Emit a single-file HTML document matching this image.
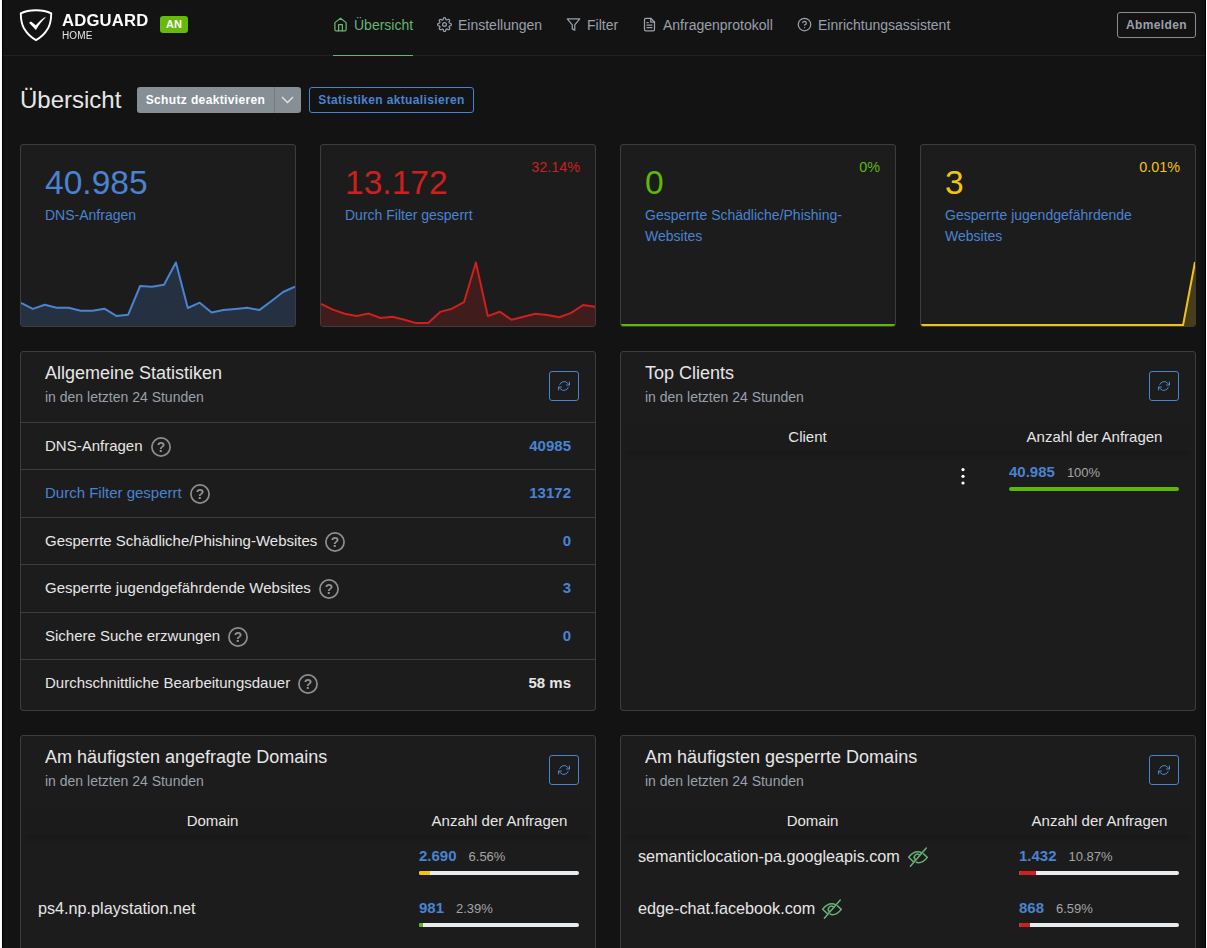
<!DOCTYPE html>
<html lang="de">
<head>
<meta charset="utf-8">
<title>AdGuard Home</title>
<style>
*{box-sizing:border-box;margin:0;padding:0}
html,body{width:1207px;height:948px;overflow:hidden;background:#131313}
body{font-family:"Liberation Sans",Arial,sans-serif;color:#e6e6e6;font-size:15px;position:relative}
.abs{position:absolute}
.edgeL{left:0;top:0;width:3px;height:948px;background:#000;border-left:2px solid #fff}
.edgeR{left:1205px;top:0;width:2px;height:948px;background:#000;border-right:1px solid #fff}
.hdr{left:3px;top:0;width:1202px;height:56px;border-bottom:1px solid #222}
.nav a{position:absolute;top:0;height:56px;color:#9aa0ac;font-size:14px;line-height:50px;white-space:nowrap;text-decoration:none}
.nav a svg{position:absolute;top:17px;width:15px;height:15px;stroke:currentColor;fill:none;stroke-width:2;stroke-linecap:round;stroke-linejoin:round}
.nav a.act{color:#66b574;border-bottom:1px solid #66b574}
.card{position:absolute;background:#1c1c1c;border:1px solid #3d3d3d;border-radius:3px;overflow:hidden}
.t{position:absolute;white-space:nowrap}
.blue{color:#4a83d1}
.btn{position:absolute;font-weight:bold;font-size:12px;letter-spacing:.36px;border-radius:3px;white-space:nowrap;text-align:center}
.rf{position:absolute;width:30px;height:30px;border:1px solid #4a83d1;border-radius:3px}
.rf svg{position:absolute;left:8px;top:8px;width:12px;height:12px;stroke:#4a83d1;fill:none;stroke-width:2;stroke-linecap:round;stroke-linejoin:round}
.title{font-size:18px;line-height:22px;color:#e6e6e6}
.sub{font-size:14px;line-height:18px;color:#9aa0ac}
.row{position:absolute;left:0;width:574px;height:48px;border-top:1px solid #3d3d3d}
.row .l{position:absolute;left:24px;top:0;line-height:46px;font-size:15px;white-space:nowrap}
.row .v{position:absolute;right:24px;top:0;line-height:46px;font-size:15px;font-weight:bold;color:#4a83d1}
.q{display:inline-block;width:20px;height:20px;vertical-align:middle;margin-left:8px;position:relative;top:0px;color:#939393;font-size:14px;font-weight:bold;line-height:21px;text-align:center;will-change:transform}
.q svg{position:absolute;left:0;top:0}
.th{position:absolute;font-size:15px;line-height:20px;color:#e6e6e6;text-align:center;white-space:nowrap}
.num{position:absolute;font-size:15px;font-weight:bold;color:#4a83d1;white-space:nowrap;line-height:16px}
.num span{font-weight:normal;color:#a5a5a5;font-size:13px;margin-left:12px}
.thr{position:absolute;left:0;top:69px;width:574px;height:30px;background:#1b1b1b;border-top:1px solid #191d25;box-shadow:0 7px 8px -5px rgba(0,0,0,.22)}
.bar{position:absolute;height:4px;width:160px;background:#e9ecef;border-radius:2px;overflow:hidden}
.bar i{display:block;height:4px}
</style>
</head>
<body>
<div class="abs edgeL"></div>
<div class="abs edgeR"></div>

<!-- header -->
<div class="abs hdr"></div>
<svg class="abs" style="left:19px;top:8px" width="34" height="34" viewBox="0 0 34 34">
  <path d="M17 2.2C11.5 2.2 5.6 3.4 1.8 5.4c0 5 .3 9.600 3.300 15.200C8 25.600 12.400 29.700 17 32.100c4.600-2.400 9-6.500 11.900-11.500 3-5.600 3.300-10.200 3.300-15.200C28.400 3.400 22.500 2.200 17 2.200z" fill="none" stroke="#fff" stroke-width="1.9"/>
  <path d="M10 14.800l2-1.200 4.800 3.600c2.800-3.300 5.700-5.900 9.300-8.300l.5.600c-3.700 3.500-6.900 7.800-9.700 12.600z" fill="#fff"/>
</svg>
<div class="t" style="left:62px;top:11px;font-size:16px;font-weight:bold;color:#fff;letter-spacing:.2px;line-height:20px;transform:scaleX(1.04);transform-origin:0 0;will-change:transform">ADGUARD</div>
<div class="t" style="left:62px;top:29.500px;font-size:10px;color:#e6e6e6;letter-spacing:.1px;line-height:12px;will-change:transform">HOME</div>
<div class="t" style="left:160px;top:16px;width:28px;height:17px;background:#67b90a;border-radius:3px;color:#fff;font-size:11px;font-weight:bold;line-height:17px;text-align:center">AN</div>

<div class="nav">
  <a class="act" style="left:333px;width:80px;padding-left:21px"><svg style="left:0" viewBox="0 0 24 24"><path d="M3 9l9-7 9 7v11a2 2 0 0 1-2 2H5a2 2 0 0 1-2-2z"/><path d="M9 22V12h6v10"/></svg>Übersicht</a>
  <a style="left:437px;padding-left:21px"><svg style="left:0" viewBox="0 0 24 24"><circle cx="12" cy="12" r="3"/><path d="M19.400 15a1.650 1.650 0 0 0 .33 1.820l.06.06a2 2 0 0 1 0 2.830 2 2 0 0 1-2.830 0l-.06-.06a1.650 1.650 0 0 0-1.820-.33 1.650 1.650 0 0 0-1 1.510V21a2 2 0 0 1-2 2 2 2 0 0 1-2-2v-.09A1.650 1.650 0 0 0 9 19.400a1.650 1.650 0 0 0-1.820.33l-.06.06a2 2 0 0 1-2.830 0 2 2 0 0 1 0-2.830l.06-.06a1.650 1.650 0 0 0 .33-1.820 1.650 1.650 0 0 0-1.510-1H3a2 2 0 0 1-2-2 2 2 0 0 1 2-2h.09A1.650 1.650 0 0 0 4.600 9a1.650 1.650 0 0 0-.33-1.820l-.06-.06a2 2 0 0 1 0-2.830 2 2 0 0 1 2.830 0l.06.06a1.650 1.650 0 0 0 1.820.33H9a1.650 1.650 0 0 0 1-1.510V3a2 2 0 0 1 2-2 2 2 0 0 1 2 2v.09a1.650 1.650 0 0 0 1 1.510 1.650 1.650 0 0 0 1.820-.33l.06-.06a2 2 0 0 1 2.830 0 2 2 0 0 1 0 2.830l-.06.06a1.650 1.650 0 0 0-.33 1.820V9a1.650 1.650 0 0 0 1.510 1H21a2 2 0 0 1 2 2 2 2 0 0 1-2 2h-.09a1.650 1.650 0 0 0-1.510 1z"/></svg>Einstellungen</a>
  <a style="left:566px;padding-left:21px"><svg style="left:0" viewBox="0 0 24 24"><path d="M22 3H2l8 9.460V19l4 2v-8.540L22 3z"/></svg>Filter</a>
  <a style="left:642px;padding-left:21px"><svg style="left:0" viewBox="0 0 24 24"><path d="M14 2H6a2 2 0 0 0-2 2v16a2 2 0 0 0 2 2h12a2 2 0 0 0 2-2V8z"/><path d="M14 2v6h6M16 13H8M16 17H8M10 9H8"/></svg>Anfragenprotokoll</a>
  <a style="left:797px;padding-left:21px"><svg style="left:0" viewBox="0 0 24 24"><circle cx="12" cy="12" r="10"/><path d="M9.090 9a3 3 0 0 1 5.830 1c0 2-3 3-3 3M12 17h.01"/></svg>Einrichtungsassistent</a>
</div>
<div class="btn" style="left:1117px;top:12px;width:79px;height:26px;border:1px solid #868e96;color:#9aa0ac;line-height:24px">Abmelden</div>

<!-- page title -->
<div class="t" style="left:20px;top:84px;font-size:24px;line-height:32px;color:#e6e6e6">Übersicht</div>
<div class="btn" style="left:137px;top:87px;width:137px;height:26px;background:#868e96;color:#fff;line-height:26px;border-radius:3px 0 0 3px">Schutz deaktivieren</div>
<div class="btn" style="left:274px;top:87px;width:27px;height:26px;background:#868e96;border-left:1px solid #747b83;border-radius:0 3px 3px 0"><svg style="position:absolute;left:6px;top:9px" width="13" height="8" viewBox="0 0 13 8"><path d="M1 1l5.500 5.500L12 1" fill="none" stroke="#e6e6e6" stroke-width="1.300"/></svg></div>
<div class="btn" style="left:309px;top:87px;width:165px;height:26px;border:1px solid #4a83d1;color:#4a83d1;line-height:24px">Statistiken aktualisieren</div>

<!-- stat cards -->
<div class="card" style="left:20px;top:144px;width:276px;height:183px">
  <div class="t" style="left:24px;top:18px;font-size:33.600px;line-height:40px;color:#4a83d1">40.985</div>
  <div class="t blue" style="left:24px;top:60px;font-size:14px;line-height:21px">DNS-Anfragen</div>
  <svg class="abs" style="left:0;top:100px" width="274" height="81" viewBox="0 0 274 81"><path d="M0.0 57.9L11.9 63.9L23.8 59.8L35.7 62.8L47.7 62.8L59.6 65.8L71.5 65.8L83.4 63.7L95.3 70.9L107.2 69.7L119.1 41L131.0 41.7L143.0 39.8L154.9 17.5L166.8 63L178.7 57.7L190.6 67.6L202.5 64.9L214.4 63.9L226.3 62.8L238.3 65.1L250.2 56.3L262.1 47L274.0 41.7V81H0Z" fill="#253140"/><path d="M0.0 57.9L11.9 63.9L23.8 59.8L35.7 62.8L47.7 62.8L59.6 65.8L71.5 65.8L83.4 63.7L95.3 70.9L107.2 69.7L119.1 41L131.0 41.7L143.0 39.8L154.9 17.5L166.8 63L178.7 57.7L190.6 67.6L202.5 64.9L214.4 63.9L226.3 62.8L238.3 65.1L250.2 56.3L262.1 47L274.0 41.7" fill="none" stroke="#4a83d1" stroke-width="2" stroke-linejoin="round"/></svg>
</div>
<div class="card" style="left:320px;top:144px;width:276px;height:183px">
  <div class="t" style="left:24px;top:18px;font-size:33.600px;line-height:40px;color:#cd201f">13.172</div>
  <div class="t" style="right:15px;top:13px;font-size:14.400px;line-height:18px;color:#cd201f">32.14%</div>
  <div class="t blue" style="left:24px;top:60px;font-size:14px;line-height:21px">Durch Filter gesperrt</div>
  <svg class="abs" style="left:0;top:100px" width="274" height="81" viewBox="0 0 274 81"><path d="M0.0 58.8L11.9 64.6L23.8 68.8L35.7 71.1L47.7 68.6L59.6 73L71.5 71.8L83.4 74.8L95.3 78.1L107.2 78.1L119.1 66.9L131.0 63.7L143.0 57.2L154.9 17.5L166.8 71.1L178.7 66.7L190.6 74.8L202.5 71.8L214.4 68.8L226.3 70L238.3 72.3L250.2 67.9L262.1 60L274.0 61.8V81H0Z" fill="#3f1d1d"/><path d="M0.0 58.8L11.9 64.6L23.8 68.8L35.7 71.1L47.7 68.6L59.6 73L71.5 71.8L83.4 74.8L95.3 78.1L107.2 78.1L119.1 66.9L131.0 63.7L143.0 57.2L154.9 17.5L166.8 71.1L178.7 66.7L190.6 74.8L202.5 71.8L214.4 68.8L226.3 70L238.3 72.3L250.2 67.9L262.1 60L274.0 61.8" fill="none" stroke="#cd201f" stroke-width="2" stroke-linejoin="round"/></svg>
</div>
<div class="card" style="left:620px;top:144px;width:276px;height:183px">
  <div class="t" style="left:24px;top:18px;font-size:33.600px;line-height:40px;color:#5eba00">0</div>
  <div class="t" style="right:15px;top:13px;font-size:14.400px;line-height:18px;color:#5eba00">0%</div>
  <div class="t blue" style="left:24px;top:60px;font-size:14px;line-height:21px">Gesperrte Schädliche/Phishing-<br>Websites</div>
  <div class="abs" style="left:0;top:179px;width:274px;height:2px;background:#5eba00"></div>
</div>
<div class="card" style="left:920px;top:144px;width:276px;height:183px">
  <div class="t" style="left:24px;top:18px;font-size:33.600px;line-height:40px;color:#f1c40f">3</div>
  <div class="t" style="right:15px;top:13px;font-size:14.400px;line-height:18px;color:#f1c40f">0.01%</div>
  <div class="t blue" style="left:24px;top:60px;font-size:14px;line-height:21px">Gesperrte jugendgefährdende<br>Websites</div>
  <svg class="abs" style="left:0;top:100px" width="274" height="81" viewBox="0 0 274 81"><path d="M0 80H262.100L274 17V81H0Z" fill="#473e19"/><path d="M0 80H262.100L274 17" fill="none" stroke="#f1c40f" stroke-width="2" stroke-linejoin="miter"/></svg>
</div>

<!-- general stats -->
<div class="card" style="left:20px;top:351px;width:576px;height:360px">
  <div class="t title" style="left:24px;top:10px">Allgemeine Statistiken</div>
  <div class="t sub" style="left:24px;top:36px">in den letzten 24 Stunden</div>
  <div class="rf" style="left:528px;top:19px"><svg viewBox="0 0 24 24"><path d="M23 4v6h-6M1 20v-6h6"/><path d="M3.510 9a9 9 0 0 1 14.850-3.360L23 10M1 14l4.640 4.360A9 9 0 0 0 20.490 15"/></svg></div>
  <div class="row" style="top:70px"><div class="l">DNS-Anfragen<span class="q"><svg width="20" height="20" viewBox="0 0 20 20"><circle cx="10" cy="10" r="9.100" fill="none" stroke="#8e8e8e" stroke-width="1.700"/></svg>?</span></div><div class="v">40985</div></div>
  <div class="row" style="top:117px"><div class="l blue">Durch Filter gesperrt<span class="q"><svg width="20" height="20" viewBox="0 0 20 20"><circle cx="10" cy="10" r="9.100" fill="none" stroke="#8e8e8e" stroke-width="1.700"/></svg>?</span></div><div class="v">13172</div></div>
  <div class="row" style="top:165px"><div class="l">Gesperrte Schädliche/Phishing-Websites<span class="q"><svg width="20" height="20" viewBox="0 0 20 20"><circle cx="10" cy="10" r="9.100" fill="none" stroke="#8e8e8e" stroke-width="1.700"/></svg>?</span></div><div class="v">0</div></div>
  <div class="row" style="top:212px"><div class="l">Gesperrte jugendgefährdende Websites<span class="q"><svg width="20" height="20" viewBox="0 0 20 20"><circle cx="10" cy="10" r="9.100" fill="none" stroke="#8e8e8e" stroke-width="1.700"/></svg>?</span></div><div class="v">3</div></div>
  <div class="row" style="top:260px"><div class="l">Sichere Suche erzwungen<span class="q"><svg width="20" height="20" viewBox="0 0 20 20"><circle cx="10" cy="10" r="9.100" fill="none" stroke="#8e8e8e" stroke-width="1.700"/></svg>?</span></div><div class="v">0</div></div>
  <div class="row" style="top:307px"><div class="l">Durchschnittliche Bearbeitungsdauer<span class="q"><svg width="20" height="20" viewBox="0 0 20 20"><circle cx="10" cy="10" r="9.100" fill="none" stroke="#8e8e8e" stroke-width="1.700"/></svg>?</span></div><div class="v" style="color:#e6e6e6">58 ms</div></div>
</div>

<!-- top clients -->
<div class="card" style="left:620px;top:351px;width:576px;height:360px">
  <div class="t title" style="left:24px;top:10px">Top Clients</div>
  <div class="t sub" style="left:24px;top:36px">in den letzten 24 Stunden</div>
  <div class="rf" style="left:528px;top:19px"><svg viewBox="0 0 24 24"><path d="M23 4v6h-6M1 20v-6h6"/><path d="M3.510 9a9 9 0 0 1 14.850-3.360L23 10M1 14l4.640 4.360A9 9 0 0 0 20.490 15"/></svg></div>
  <div class="thr"></div>
  <div class="th" style="left:0;width:373px;top:75px">Client</div>
  <div class="th" style="left:373px;width:201px;top:75px">Anzahl der Anfragen</div>
  <svg class="abs" style="left:330px;top:112px" width="24" height="24" viewBox="0 0 24 24" fill="#fff"><circle cx="12" cy="5.600" r="1.600"/><circle cx="12" cy="12.300" r="1.600"/><circle cx="12" cy="19" r="1.600"/></svg>
  <div class="num" style="left:388px;top:112px">40.985<span>100%</span></div>
  <div class="bar" style="left:388px;top:135px;width:170px;background:#5eba00"></div>
</div>

<!-- top queried -->
<div class="card" style="left:20px;top:735px;width:576px;height:260px">
  <div class="t title" style="left:24px;top:10px">Am häufigsten angefragte Domains</div>
  <div class="t sub" style="left:24px;top:36px">in den letzten 24 Stunden</div>
  <div class="rf" style="left:528px;top:19px"><svg viewBox="0 0 24 24"><path d="M23 4v6h-6M1 20v-6h6"/><path d="M3.510 9a9 9 0 0 1 14.850-3.360L23 10M1 14l4.640 4.360A9 9 0 0 0 20.490 15"/></svg></div>
  <div class="thr"></div>
  <div class="th" style="left:0;width:383px;top:75px">Domain</div>
  <div class="th" style="left:383px;width:191px;top:75px">Anzahl der Anfragen</div>
  <div class="num" style="left:398px;top:112px">2.690<span>6.56%</span></div>
  <div class="bar" style="left:398px;top:135px"><i style="width:11px;background:#f1c40f"></i></div>
  <div class="t" style="left:17px;top:161px;font-size:16.200px;line-height:22px">ps4.np.playstation.net</div>
  <div class="num" style="left:398px;top:164px">981<span>2.39%</span></div>
  <div class="bar" style="left:398px;top:187px"><i style="width:4px;background:#5eba00"></i></div>
</div>

<!-- top blocked -->
<div class="card" style="left:620px;top:735px;width:576px;height:260px">
  <div class="t title" style="left:24px;top:10px">Am häufigsten gesperrte Domains</div>
  <div class="t sub" style="left:24px;top:36px">in den letzten 24 Stunden</div>
  <div class="rf" style="left:528px;top:19px"><svg viewBox="0 0 24 24"><path d="M23 4v6h-6M1 20v-6h6"/><path d="M3.510 9a9 9 0 0 1 14.850-3.360L23 10M1 14l4.640 4.360A9 9 0 0 0 20.490 15"/></svg></div>
  <div class="thr"></div>
  <div class="th" style="left:0;width:383px;top:75px">Domain</div>
  <div class="th" style="left:383px;width:191px;top:75px">Anzahl der Anfragen</div>
  <div class="t" style="left:17px;top:109px;font-size:16.200px;line-height:22px">semanticlocation-pa.googleapis.com</div>
  <svg class="abs" style="left:279px;top:106px" width="36" height="30" viewBox="0 0 36 30" fill="none" stroke="#67b279" stroke-width="1.600" stroke-linecap="round" stroke-linejoin="round"><g transform="translate(17.900 15.200) scale(.93) translate(-17.900 -15.100)"><path d="M12.800 19.600L7.900 15.200Q12.500 9.200 18 9.200Q20.300 9.200 21.800 10.400"/><path d="M23.800 11.300L28 15.300Q23.500 21.200 18.300 21Q17 21 16.200 20.400"/><path d="M9.800 24.800L26.900 5.200"/><path d="M15.200 17.600A3.300 3.300 0 0 1 19.600 12.600"/></g></svg>
  <div class="num" style="left:398px;top:112px">1.432<span>10.87%</span></div>
  <div class="bar" style="left:398px;top:135px"><i style="width:17px;background:#cd201f"></i></div>
  <div class="t" style="left:17px;top:161px;font-size:16.200px;line-height:22px">edge-chat.facebook.com</div>
  <svg class="abs" style="left:193px;top:158px" width="36" height="30" viewBox="0 0 36 30" fill="none" stroke="#67b279" stroke-width="1.600" stroke-linecap="round" stroke-linejoin="round"><g transform="translate(17.900 15.200) scale(.93) translate(-17.900 -15.100)"><path d="M12.800 19.600L7.900 15.200Q12.500 9.200 18 9.200Q20.300 9.200 21.800 10.400"/><path d="M23.800 11.300L28 15.300Q23.500 21.200 18.300 21Q17 21 16.200 20.400"/><path d="M9.800 24.800L26.900 5.200"/><path d="M15.200 17.600A3.300 3.300 0 0 1 19.600 12.600"/></g></svg>
  <div class="num" style="left:398px;top:164px">868<span>6.59%</span></div>
  <div class="bar" style="left:398px;top:187px"><i style="width:11px;background:#cd201f"></i></div>
</div>
</body>
</html>
